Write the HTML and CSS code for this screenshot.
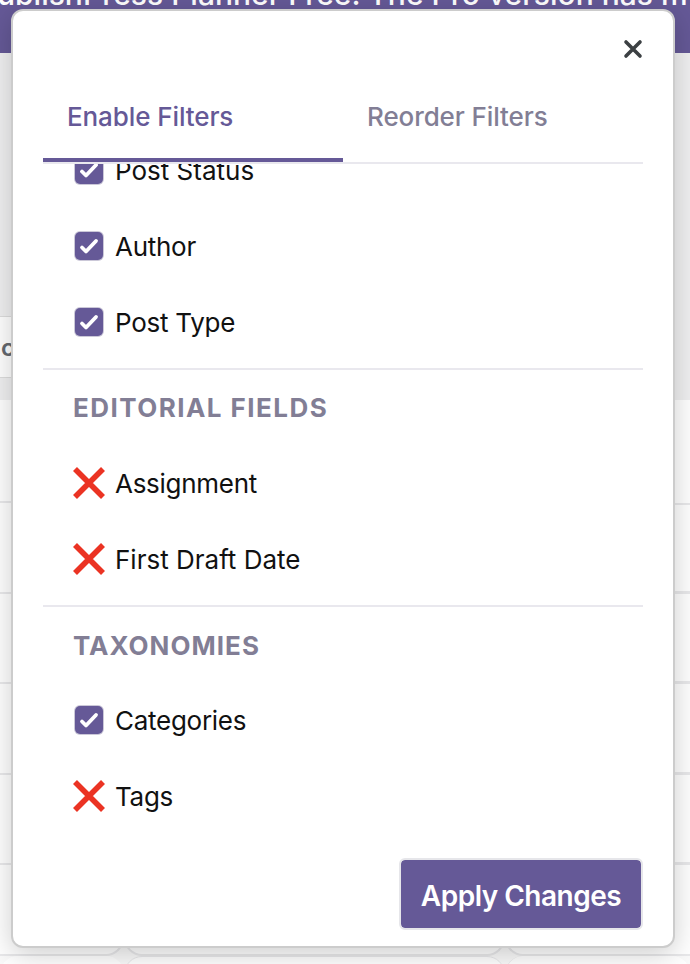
FILE: index.html
```html
<!DOCTYPE html>
<html lang="en">
<head>
<meta charset="utf-8">
<title>Filters</title>
<link rel="stylesheet" href="styles.css">
</head>
<body>
<div class="page">
  <header class="banner"><span>ublishPress Planner Free. The Pro version has m</span></header>
  <div class="toolbar"><div class="filter">c</div></div>
  <div class="calendar">
    <div class="week first"><i></i><i></i><i></i></div>
    <div class="week"><i></i><i></i><i></i></div>
    <div class="week"><i></i><i></i><i></i></div>
    <div class="week"><i></i><i></i><i></i></div>
    <div class="week"><i></i><i></i><i></i></div>
    <div class="week rounded"><i></i><i></i><i></i></div>
    <div class="week next"><i></i><i></i><i></i></div>
  </div>
</div>
<div class="modal">
  <div class="top">
    <svg class="close" viewBox="0 0 20 20"><path d="M3 3 17 17M17 3 3 17"/></svg>
  </div>
  <nav class="tabs">
    <div class="tab active"><span>Enable Filters</span></div>
    <div class="tab"><span>Reorder Filters</span></div>
  </nav>
  <div class="list">
    <section class="group clipped">
      <div class="row"><span class="box"><svg viewBox="0 0 28 28"><path d="M7 15.5 11 19.5 21 9"/></svg></span><span class="wide">Post Status</span></div>
      <div class="row"><span class="box"><svg viewBox="0 0 28 28"><path d="M7 15.5 11 19.5 21 9"/></svg></span><span>Author</span></div>
      <div class="row"><span class="box"><svg viewBox="0 0 28 28"><path d="M7 15.5 11 19.5 21 9"/></svg></span><span>Post Type</span></div>
    </section>
    <section class="group">
      <h2>EDITORIAL FIELDS</h2>
      <div class="row"><svg class="cross" viewBox="0 0 32 32"><path d="M2 2 30 30M30 2 2 30"/></svg><span>Assignment</span></div>
      <div class="row"><svg class="cross" viewBox="0 0 32 32"><path d="M2 2 30 30M30 2 2 30"/></svg><span class="wide">First Draft Date</span></div>
    </section>
    <section class="group taxonomies">
      <h2>TAXONOMIES</h2>
      <div class="row"><span class="box"><svg viewBox="0 0 28 28"><path d="M7 15.5 11 19.5 21 9"/></svg></span><span>Categories</span></div>
      <div class="row"><svg class="cross" viewBox="0 0 32 32"><path d="M2 2 30 30M30 2 2 30"/></svg><span>Tags</span></div>
    </section>
  </div>
  <footer class="actions"><button>Apply Changes</button></footer>
</div>
</body>
</html>
```
FILE: styles.css
```css
* { box-sizing: border-box; }
body { margin: 0; height: 964px; overflow: hidden; position: relative; font-family: Inter, "Liberation Sans", sans-serif; color: #111; }
.page { height: 964px; overflow: hidden; background: #f0f0f1; }
.banner { height: 53px; background: #655997; color: #fff; overflow: hidden; white-space: nowrap; font-size: 30px; font-weight: 500; line-height: 36px; }
.banner span { display: block; margin: -24px 0 0 -3px; }
.toolbar { height: 347px; padding-top: 263px; }
.filter { width: 124px; height: 62px; background: #fff; border: 1px solid #ddd; border-left: 0; color: #646970; font-size: 24px; font-weight: 600; line-height: 61px; padding-left: 1px; }
.calendar { background: #fafafa; }
.week { display: grid; grid-template-columns: 124px 381px 1fr; height: 90.5px; }
.week.first { height: 103px; }
.week i { background: #fff; border-bottom: 2px solid #e9e9eb; }
.week i:last-child { border-bottom-width: 3px; }
.week.first i:last-child { border-bottom-width: 2px; margin-bottom: -2px; position: relative; }
.week.rounded { height: 91px; }
.week.rounded i { border: 2px solid #e9e9eb; border-top: 0; border-radius: 0 0 18px 18px; }
.week.rounded i:first-child { border-left: 0; border-bottom-left-radius: 0; }
.week.rounded i:last-child { border-right: 0; border-bottom-right-radius: 0; }
.week.next i { border: 1px solid #e9e9eb; border-radius: 18px 18px 0 0; }
.week.next i:first-child { border: 0; }
.week.next i:last-child { border-top: 0; border-right: 0; }
.modal { position: absolute; left: 11px; top: 9px; width: 664px; height: 939px; background: #fff; border: 2px solid #ccc; border-radius: 12px; box-shadow: 0 6px 28px rgba(0,0,0,.2); padding: 0 30px; display: flex; flex-direction: column; }
.top { height: 61px; flex: none; display: flex; justify-content: flex-end; padding: 27.5px .5px 0 0; }
.close { width: 20px; height: 20px; stroke: #3c4043; stroke-width: 3.6; stroke-linecap: round; fill: none; }
.tabs { display: flex; height: 92px; flex: none; border-bottom: 2px solid #e9e8ee; }
.tab { width: 300px; height: 90px; padding: 0 24px; font-size: 26px; font-weight: 550; letter-spacing: -.1px; line-height: 90px; color: #827e95; white-space: nowrap; }
.tab.active { color: #655997; border-bottom: 4px solid #655997; }
.list { height: 680px; flex: none; overflow: hidden; }
.group { border-bottom: 2px solid #e9e8ee; padding: 0 0 8px 30px; }
.group:last-child { border-bottom: 0; }
.group.clipped { margin-top: -32px; }
h2 { margin: 0; height: 75px; line-height: 76px; font-size: 26px; font-weight: 700; letter-spacing: 1.45px; color: #827e95; }
.taxonomies h2 { line-height: 78px; letter-spacing: 1.05px; }
.row { height: 76px; display: flex; align-items: center; font-size: 26px; letter-spacing: -.27px; white-space: nowrap; }
.row span:last-child { padding-top: 1px; }
.wide { letter-spacing: 0; }
.box { width: 28px; height: 28px; margin: 0 12px 0 2px; border-radius: 5px; background: #655997; box-shadow: 0 0 0 1px #cbc8d8; flex: none; }
svg { display: block; }
.box svg { width: 28px; height: 28px; fill: none; stroke: #fff; stroke-width: 3.8; stroke-linecap: round; stroke-linejoin: round; }
.cross { width: 32px; height: 32px; margin-right: 10px; stroke: #eb3323; stroke-width: 5.6; fill: none; overflow: visible; }
.actions { display: flex; justify-content: flex-end; padding-top: 14px; }
button { width: 244px; height: 72px; margin: 0; border: 2px solid #e6e6ea; border-radius: 6px; background: #655997; background-clip: padding-box; color: #fff; font: 600 28px/68px Inter, sans-serif; letter-spacing: -.5px; padding: 2px 0 0; white-space: nowrap; }
```
